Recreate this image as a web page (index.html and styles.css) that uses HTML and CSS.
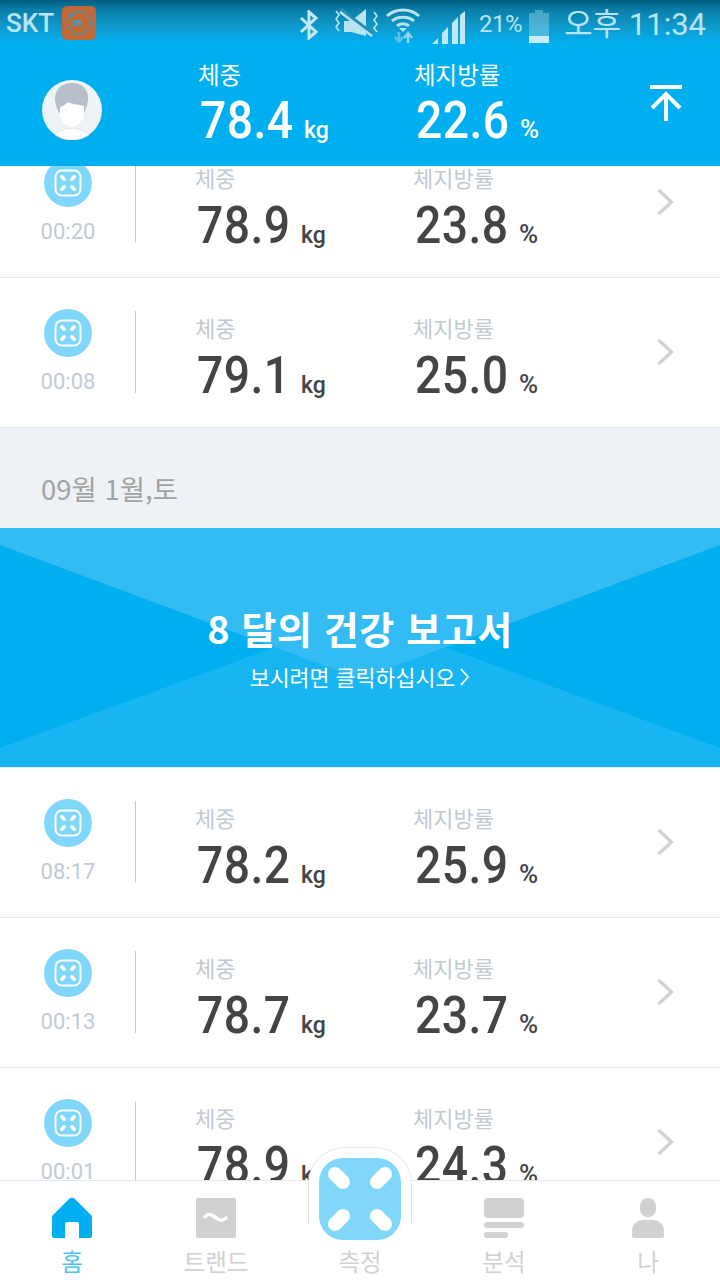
FILE: index.html
```html
<!DOCTYPE html>
<html lang="ko">
<head>
<meta charset="utf-8">
<title>체중</title>
<link rel="stylesheet" href="styles.css">
</head>
<body>
<svg class="defs" width="0" height="0" aria-hidden="true">
  <symbol id="scale" viewBox="0 0 48 48">
    <circle cx="24" cy="24" r="24" fill="#80d7fa"/>
    <rect x="11.500" y="11.500" width="25" height="25" rx="6.500" fill="none" stroke="#fff" stroke-width="2"/>
    <g stroke="#fff" stroke-width="3.600" stroke-linecap="round">
      <path d="M17.800 17.800l2.400 2.400M30.200 17.800l-2.400 2.400M17.800 30.200l2.400-2.400M30.200 30.200l-2.400-2.400"/>
    </g>
  </symbol>
  <symbol id="chev" viewBox="0 0 18 28">
    <path d="M1.500 2l13 12-13 12" fill="none" stroke="#d2d2d2" stroke-width="3.400"/>
  </symbol>
</svg>
<div class="phone">
  <header class="top">
    <div class="status">
      <div class="status-left">
        <span class="carrier">SKT</span>
        <svg class="mi" width="34" height="34" viewBox="0 0 34 34"><rect width="34" height="34" rx="5" fill="#bf6a36"/><circle cx="17" cy="17" r="11.500" fill="none" stroke="#1d9fd4" stroke-width="1"/><path d="M7 11a12 12 0 0 1 5-4" stroke="#1d9fd4" stroke-width="2" fill="none"/><path d="M12.500 20v-5h5v5M15 15v5M19 15v5" fill="none" stroke="#2aa7dc" stroke-width="1.300"/></svg>
      </div>
      <div class="status-right">
        <svg width="20" height="30" viewBox="0 0 20 30"><path d="M2 8l15 14-7 6V2l7 6L2 22" fill="none" stroke="#c4e8f5" stroke-width="3"/></svg>
        <svg class="mute" width="46" height="34" viewBox="0 0 46 34"><path d="M11 15h7L33 3v27L18 26h-7z" fill="#b9e4f3"/><path d="M7 4l32 24" stroke="#2a8db3" stroke-width="5"/><path d="M7 7l32 24" stroke="#b9e4f3" stroke-width="2.400" transform="translate(0 -1)"/><path d="M3 5l3 4-3 4 3 4-3 4 3 4M41 6l3 4-3 4 3 4-3 4 3 4" fill="none" stroke="#b9e4f3" stroke-width="1.600"/></svg>
        <svg class="wifi" width="34" height="36" viewBox="0 0 34 36"><path d="M1 9C10 1 24 1 33 9M6 14c6-5 16-5 22 0M11 19c3-3 9-3 12 0" fill="none" stroke="#b9e4f3" stroke-width="3"/><path d="M17 26l-4-4h8z" fill="#b9e4f3" transform="translate(0 -1)"/><path d="M13 25v10M9 30l4 5 4-5" fill="none" stroke="#57c3ee" stroke-width="2.500"/><path d="M22 36V26M18 31l4-5 4 5" fill="none" stroke="#8ed6f1" stroke-width="2.500"/></svg>
        <svg class="signal" width="34" height="34" viewBox="0 0 34 34"><path d="M0 33l6-6v6zM10 33V22l6-6v17zM20 33V12l6-6v27zM28 33V4l5-4v33z" fill="#c2e8f5"/></svg>
        <span class="pct">21%</span>
        <span class="batt"><span class="batt-fill"></span></span>
        <span class="clock">오후 11:34</span>
      </div>
    </div>
    <div class="summary">
      <div class="avatar">
        <svg width="60" height="60" viewBox="0 0 60 60"><circle cx="30" cy="30" r="30" fill="#eef3f8"/><path d="M13 55c2-4 9-5 13-7l3 1 4-1c4 2 11 3 14 7a30 30 0 0 1-34 0z" fill="#fff" stroke="#cfd6de" stroke-width=".6"/><path d="M13 21C12 9 20 3 30 3c10 0 17 6 16 18-1 4-2 8-4 12H17c-2-4-3-8-4-12z" fill="#b6bfca"/><path d="M18 27c3-1 6-3 8-5 4 2 12 3 16 4v8c-1 8-8 13-12.500 13S18 42 18 34z" fill="#fff"/></svg>
      </div>
      <div class="metric metric-a">
        <div class="label">체중</div>
        <div class="value-line"><span class="value">78.4</span><span class="unit">kg</span></div>
      </div>
      <div class="metric">
        <div class="label">체지방률</div>
        <div class="value-line"><span class="value">22.6</span><span class="unit unit-pct">%</span></div>
      </div>
      <svg class="to-top" width="34" height="36" viewBox="0 0 34 36"><path d="M1 2h32" stroke="#fff" stroke-width="4"/><path d="M17 36V8M3 23L17 9l14 14" fill="none" stroke="#fff" stroke-width="4"/></svg>
    </div>
  </header>

  <main class="list">
    <article class="row">
      <div class="when"><svg class="scale" width="48" height="48"><use href="#scale"/></svg><time>00:20</time></div>
      <div class="metric metric-a"><div class="label">체중</div><div class="value-line"><span class="value">78.9</span><span class="unit">kg</span></div></div>
      <div class="metric"><div class="label">체지방률</div><div class="value-line"><span class="value">23.8</span><span class="unit unit-pct">%</span></div></div>
      <svg class="chev" width="18" height="28"><use href="#chev"/></svg>
    </article>
    <article class="row">
      <div class="when"><svg class="scale" width="48" height="48"><use href="#scale"/></svg><time>00:08</time></div>
      <div class="metric metric-a"><div class="label">체중</div><div class="value-line"><span class="value">79.1</span><span class="unit">kg</span></div></div>
      <div class="metric"><div class="label">체지방률</div><div class="value-line"><span class="value">25.0</span><span class="unit unit-pct">%</span></div></div>
      <svg class="chev" width="18" height="28"><use href="#chev"/></svg>
    </article>
    <div class="date">09월 1월,토</div>
    <section class="banner">
      <h2 class="banner-title">8 달의 건강 보고서</h2>
      <p class="banner-sub">보시려면 클릭하십시오<svg class="banner-chev" width="10" height="18" viewBox="0 0 10 18"><path d="M1 1l7 8-7 8" fill="none" stroke="#fff" stroke-width="1.800"/></svg></p>
    </section>
    <article class="row">
      <div class="when"><svg class="scale" width="48" height="48"><use href="#scale"/></svg><time>08:17</time></div>
      <div class="metric metric-a"><div class="label">체중</div><div class="value-line"><span class="value">78.2</span><span class="unit">kg</span></div></div>
      <div class="metric"><div class="label">체지방률</div><div class="value-line"><span class="value">25.9</span><span class="unit unit-pct">%</span></div></div>
      <svg class="chev" width="18" height="28"><use href="#chev"/></svg>
    </article>
    <article class="row">
      <div class="when"><svg class="scale" width="48" height="48"><use href="#scale"/></svg><time>00:13</time></div>
      <div class="metric metric-a"><div class="label">체중</div><div class="value-line"><span class="value">78.7</span><span class="unit">kg</span></div></div>
      <div class="metric"><div class="label">체지방률</div><div class="value-line"><span class="value">23.7</span><span class="unit unit-pct">%</span></div></div>
      <svg class="chev" width="18" height="28"><use href="#chev"/></svg>
    </article>
    <article class="row">
      <div class="when"><svg class="scale" width="48" height="48"><use href="#scale"/></svg><time>00:01</time></div>
      <div class="metric metric-a"><div class="label">체중</div><div class="value-line"><span class="value">78.9</span><span class="unit">kg</span></div></div>
      <div class="metric"><div class="label">체지방률</div><div class="value-line"><span class="value">24.3</span><span class="unit unit-pct">%</span></div></div>
      <svg class="chev" width="18" height="28"><use href="#chev"/></svg>
    </article>
  </main>

  <nav class="tabs">
    <div class="tab tab-on">
      <svg width="40" height="42" viewBox="0 0 40 42"><path d="M17 2a4 4 0 0 1 6 0l15 15a4 4 0 0 1 2 3v19a2 2 0 0 1-2 2H27V27a2 2 0 0 0-2-2h-10a2 2 0 0 0-2 2v14H2a2 2 0 0 1-2-2V20a4 4 0 0 1 2-3z" fill="#00aff0"/></svg>
      <span>홈</span>
    </div>
    <div class="tab">
      <svg width="40" height="42" viewBox="0 0 40 42"><rect y="1" width="40" height="40" rx="2" fill="#d1d1d1"/><path d="M9 20c3-4 6-3 10 0s7 5 11 1" fill="none" stroke="#fff" stroke-width="3.500" stroke-linecap="round"/></svg>
      <span>트랜드</span>
    </div>
    <div class="tab tab-center">
      <div class="scale-btn">
        <svg width="82" height="82" viewBox="0 0 82 82"><rect width="82" height="82" rx="24" fill="#80d7fa"/><g stroke="#fff" stroke-width="14" stroke-linecap="round"><path d="M16 16l8 8M66 16l-8 8M16 66l8-8M66 66l-8-8"/></g></svg>
      </div>
      <span>측정</span>
    </div>
    <div class="tab">
      <svg width="40" height="42" viewBox="0 0 40 42"><rect y="1" width="40" height="20" rx="4" fill="#d1d1d1"/><rect y="25" width="40" height="6" rx="3" fill="#d1d1d1"/><rect y="35" width="24" height="6" rx="3" fill="#d1d1d1"/></svg>
      <span>분석</span>
    </div>
    <div class="tab">
      <svg width="40" height="42" viewBox="0 0 40 42"><rect x="12" y="1" width="16" height="19" rx="8" fill="#d1d1d1"/><path d="M4 34c0-7 5-11 11-11h10c6 0 11 4 11 11v5a2 2 0 0 1-2 2H6a2 2 0 0 1-2-2z" fill="#d1d1d1"/></svg>
      <span>나</span>
    </div>
  </nav>
</div>
</body>
</html>
```
FILE: styles.css
```css
* { box-sizing: border-box; }
html, body { margin: 0; padding: 0; }
body { background: #fff; font-family: "Noto Sans CJK KR", "Roboto", sans-serif; }
.defs { position: absolute; }
.phone { position: relative; width: 720px; height: 1280px; overflow: hidden; background: #fff; }

/* Header overlay */
.top { position: absolute; top: 0; left: 0; right: 0; height: 166px; z-index: 2; background: #00aff0; }
.status { height: 46px; padding: 6px 14px 0 6px; display: flex; justify-content: space-between; align-items: flex-start; background: linear-gradient(#005d7f 0, #0a7ea9 10px, #0f9ccf 28px, #00aff0 44px); color: #b9e4f3; }
.status-left { display: flex; align-items: center; gap: 8px; }
.carrier { font: 500 26px/34px "Roboto", sans-serif; }
.status-right { display: flex; align-items: flex-start; }
.status-right svg { display: block; margin-top: 4px; }
.status-right .mute { margin-left: 14px; margin-top: 0; }
.status-right .wifi { margin-left: 7px; margin-top: 1px; }
.status-right .signal { margin-left: 12px; margin-top: 5px; }
.pct { font: 400 24px/36px "Roboto", sans-serif; margin-left: 13px; letter-spacing: -0.5px; }
.batt { position: relative; width: 20px; height: 30px; margin: 7px 0 0 7px; background: rgba(185, 228, 243, .35); }
.batt::before { content: ""; position: absolute; top: -3px; left: 6px; width: 8px; height: 3px; background: rgba(185, 228, 243, .35); }
.batt-fill { position: absolute; left: 0; right: 0; bottom: 0; height: 7px; background: #c8eefb; }
.clock { font: 400 31px/38px "Roboto", "Noto Sans CJK KR", sans-serif; margin-left: 15px; }

.summary { position: relative; display: flex; height: 120px; padding: 14px 0 0 42px; align-items: flex-start; }
.avatar { width: 60px; height: 60px; margin: 20px 0 0; flex: none; }
.avatar svg { display: block; }
.summary .metric-a { margin-left: 96px; }
.summary .metric { width: 216px; }
.summary .value-line { margin-top: 3px; color: #fff; }
.to-top { position: absolute; top: 39px; left: 649px; }

/* Metrics */
.metric { flex: none; width: 218px; }
.label { font-size: 22px; line-height: 30px; color: #c1cad3; margin-top: -1px; }
.summary .label { color: #fff; font-size: 23.500px; }
.value-line { display: flex; align-items: baseline; margin-top: 5px; padding-left: 2px; height: 58px; color: #444; }
.value { display: inline-block; font: 500 52px/58px "Roboto", sans-serif; letter-spacing: .5px; width: 104px; white-space: nowrap; transform: scaleX(.89); transform-origin: left center; }
.unit { font: 500 23px/30px "Roboto", sans-serif; }
.unit-pct { font-size: 26px; }

/* List */
.list { padding-top: 128px; }
.row { display: flex; align-items: flex-start; height: 150px; padding-top: 35px; border-bottom: 1px solid #e4e8ec; position: relative; }
.when { flex: none; width: 136px; height: 82px; margin-top: -4px; margin-right: 59px; padding-left: 44px; display: flex; flex-direction: column; position: relative; }
.when::after { content: ""; position: absolute; right: 0; top: 2px; width: 1px; height: 82px; background: #c1cad3; }
.scale { display: block; flex: none; }
.when time { display: block; margin: 11px 0 0 -6px; width: 60px; text-align: center; white-space: nowrap; font: 400 22px/28px "Roboto", sans-serif; color: #c1cad3; }
.chev { flex: none; margin: 25px 0 0 26px; }
.row:last-child { border-bottom: 0; }

.date { height: 100px; background: #eef2f6; padding: 42px 0 0 41px; font-size: 27.500px; line-height: 36px; color: #a3a3a3; }

.banner { position: relative; height: 240px; padding-top: 72px; background: #00aff0; text-align: center; color: #fff; border-bottom: 1px solid #e4e8ec; overflow: hidden; }
.banner::before, .banner::after { content: ""; position: absolute; inset: 0; }
.banner::before { background: #17b6f3; clip-path: polygon(0 220px, 360px 88px, 720px 220px, 720px 240px, 0 240px); }
.banner::after { background: #33bcf4; clip-path: polygon(0 0, 720px 0, 720px 17px, 360px 151px, 0 17px); }
.banner-title { position: relative; z-index: 1; margin: 0; font-size: 38px; line-height: 56px; font-weight: 700; letter-spacing: .6px; }
.banner-sub { position: relative; z-index: 1; margin: 6px 0 0; font-size: 21.700px; line-height: 30px; display: flex; justify-content: center; align-items: center; gap: 5px; }

/* Tab bar overlay */
.tabs { position: absolute; left: 0; right: 0; bottom: 0; height: 100px; z-index: 3; display: flex; background: #fff; border-top: 1px solid #dfe9f5; }
.tab { flex: none; width: 144px; display: flex; flex-direction: column; align-items: center; padding-top: 16px; color: #d1d1d1; font-size: 23.500px; line-height: 34px; position: relative; }
.tab svg { display: block; }
.tab span { position: absolute; top: 63px; left: 0; right: 0; text-align: center; }
.tab-on { color: #4bc3f5; }
.scale-btn { position: absolute; top: -34px; left: 20px; width: 104px; height: 78px; padding: 10px 0 0 10px; background: #fff; border: 1px solid #dfe9f5; border-bottom: 0; border-radius: 36px 36px 0 0; }
```
